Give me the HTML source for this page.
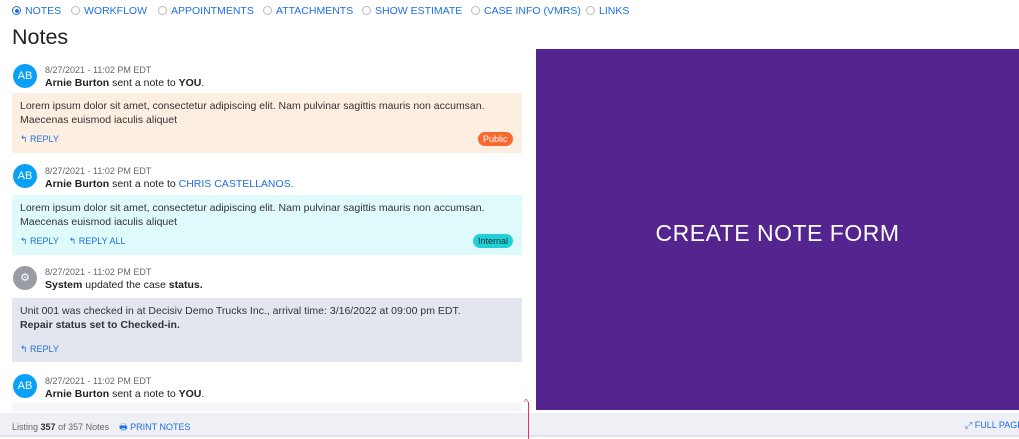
<!DOCTYPE html><html><head><style>
*{margin:0;padding:0;box-sizing:border-box}
body{width:1019px;height:439px;overflow:hidden;background:#fff;font-family:"Liberation Sans",sans-serif;position:relative;color:#222}
.a{position:absolute;white-space:nowrap}
.tab{font-size:10.5px;color:#1e6fe0;top:5px}
.rad{display:inline-block;width:9px;height:9px;border:1px solid #bbb;border-radius:50%;vertical-align:-1px;margin-right:4px;position:relative}
.rad.on{border-color:#1e6fe0}.rad.on:after{content:"";position:absolute;left:1.5px;top:1.5px;width:4px;height:4px;border-radius:50%;background:#1e6fe0}
.av{position:absolute;left:13px;width:24px;height:24px;border-radius:50%;background:#0aa0f5;color:#fff;font-size:11px;text-align:center;line-height:24px}
.date{font-size:9px;color:#666;left:45px}
.hd{font-size:10.5px;left:45px;color:#222}
.box{position:absolute;left:12px;width:510px}
.bt{font-size:10.5px;color:#333;left:20px;line-height:14px}
.rp{font-size:9px;color:#1e6fe0}
.badge{position:absolute;font-size:9px;border-radius:8px;padding:2px 5px}
</style></head><body>
<div class="a tab" style="left:12px"><span class="rad on"></span>NOTES</div>
<div class="a tab" style="left:71px"><span class="rad"></span>WORKFLOW</div>
<div class="a tab" style="left:158px"><span class="rad"></span>APPOINTMENTS</div>
<div class="a tab" style="left:263px"><span class="rad"></span>ATTACHMENTS</div>
<div class="a tab" style="left:362px"><span class="rad"></span>SHOW ESTIMATE</div>
<div class="a tab" style="left:471px"><span class="rad"></span>CASE INFO (VMRS)</div>
<div class="a tab" style="left:586px"><span class="rad"></span>LINKS</div>
<div class="a" style="left:12px;top:25px;font-size:21.5px;color:#222">Notes</div>

<div class="av" style="top:64px">AB</div>
<div class="a date" style="top:65px">8/27/2021 - 11:02 PM EDT</div>
<div class="a hd" style="top:77px"><b>Arnie Burton</b> sent a note to <b>YOU</b>.</div>
<div class="box" style="top:93px;height:60px;background:#fdeee2"></div>
<div class="a bt" style="top:99px">Lorem ipsum dolor sit amet, consectetur adipiscing elit. Nam pulvinar sagittis mauris non accumsan.<br>Maecenas euismod iaculis aliquet</div>
<div class="a rp" style="left:20px;top:134px">↰ REPLY</div>
<div class="badge" style="left:478px;top:132px;background:#f7692f;color:#fff">Public</div>

<div class="av" style="top:164px">AB</div>
<div class="a date" style="top:166px">8/27/2021 - 11:02 PM EDT</div>
<div class="a hd" style="top:178px"><b>Arnie Burton</b> sent a note to <span style="color:#1e6fe0">CHRIS CASTELLANOS.</span></div>
<div class="box" style="top:195px;height:60px;background:#dffafb"></div>
<div class="a bt" style="top:201px">Lorem ipsum dolor sit amet, consectetur adipiscing elit. Nam pulvinar sagittis mauris non accumsan.<br>Maecenas euismod iaculis aliquet</div>
<div class="a rp" style="left:20px;top:236px">↰ REPLY &nbsp;&nbsp;&nbsp;↰ REPLY ALL</div>
<div class="badge" style="left:473px;top:234px;background:#22d0d8;color:#133">Internal</div>

<div class="av" style="top:266px;background:#9a9ca4">⚙</div>
<div class="a date" style="top:267px">8/27/2021 - 11:02 PM EDT</div>
<div class="a hd" style="top:279px"><b>System</b> updated the case <b>status.</b></div>
<div class="box" style="top:298px;height:64px;background:#e3e6ef"></div>
<div class="a bt" style="top:304px">Unit 001 was checked in at Decisiv Demo Trucks Inc., arrival time: 3/16/2022 at 09:00 pm EDT.<br><b>Repair status set to Checked-in.</b></div>
<div class="a rp" style="left:20px;top:344px">↰ REPLY</div>

<div class="av" style="top:374px">AB</div>
<div class="a date" style="top:376px">8/27/2021 - 11:02 PM EDT</div>
<div class="a hd" style="top:388px"><b>Arnie Burton</b> sent a note to <b>YOU</b>.</div>
<div class="box" style="top:403px;height:8px;background:#f5f6f8"></div>

<div style="position:absolute;left:536px;top:49px;width:483px;height:361px;background:#54258e"></div>
<div class="a" style="left:536px;width:483px;text-align:center;top:220px;color:#fff;font-size:23px;letter-spacing:0.5px">CREATE NOTE FORM</div>

<div style="position:absolute;left:0;top:413px;width:1019px;height:24px;background:#eff0f5;border-bottom:2px solid #e2e4ea"></div>
<div class="a" style="left:12px;top:420px;font-size:9px;color:#666">Listing <b style="color:#333">357</b> of 357 Notes &nbsp;&nbsp; <span style="color:#1e6fe0">🖶 PRINT NOTES</span></div>
<div class="a" style="left:965px;top:420px;font-size:9px;color:#1e6fe0">⤢ FULL PAGE</div>
<div style="position:absolute;left:528px;top:402px;width:1px;height:37px;background:#e0336a"></div>
<div class="a" style="left:524px;top:397px;font-size:9px;color:#e0336a">^</div>
</body></html>
